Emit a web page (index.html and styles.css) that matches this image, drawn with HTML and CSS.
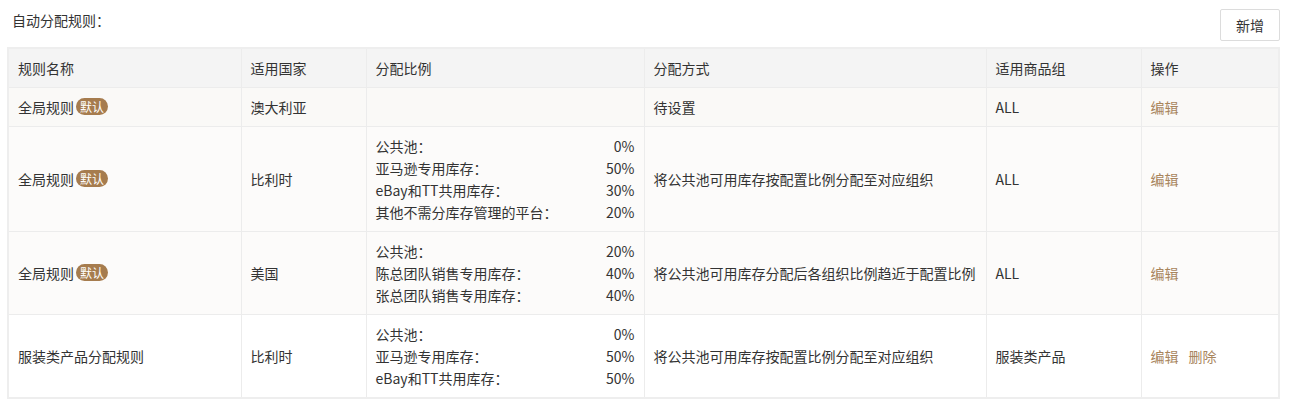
FILE: index.html
```html
<!DOCTYPE html>
<html lang="zh">
<head>
<meta charset="utf-8">
<title>自动分配规则</title>
<link rel="stylesheet" href="styles.css">
</head>
<body>
<div class="bar">
  <div class="title">自动分配规则：</div>
  <button class="btn">新增</button>
</div>
<table class="rules">
  <colgroup>
    <col class="c1"><col class="c2"><col class="c3"><col class="c4"><col class="c5"><col class="c6">
  </colgroup>
  <thead>
    <tr><th>规则名称</th><th>适用国家</th><th>分配比例</th><th>分配方式</th><th>适用商品组</th><th>操作</th></tr>
  </thead>
  <tbody>
    <tr class="r1">
      <td>全局规则<span class="badge">默认</span></td>
      <td>澳大利亚</td>
      <td></td>
      <td>待设置</td>
      <td>ALL</td>
      <td><a class="op">编辑</a></td>
    </tr>
    <tr class="r2">
      <td>全局规则<span class="badge">默认</span></td>
      <td>比利时</td>
      <td>
        <div class="ratio"><span>公共池：</span><span>0%</span></div>
        <div class="ratio"><span>亚马逊专用库存：</span><span>50%</span></div>
        <div class="ratio"><span>eBay和TT共用库存：</span><span>30%</span></div>
        <div class="ratio"><span>其他不需分库存管理的平台：</span><span>20%</span></div>
      </td>
      <td>将公共池可用库存按配置比例分配至对应组织</td>
      <td>ALL</td>
      <td><a class="op">编辑</a></td>
    </tr>
    <tr class="r2">
      <td>全局规则<span class="badge">默认</span></td>
      <td>美国</td>
      <td>
        <div class="ratio"><span>公共池：</span><span>20%</span></div>
        <div class="ratio"><span>陈总团队销售专用库存：</span><span>40%</span></div>
        <div class="ratio"><span>张总团队销售专用库存：</span><span>40%</span></div>
      </td>
      <td>将公共池可用库存分配后各组织比例趋近于配置比例</td>
      <td>ALL</td>
      <td><a class="op">编辑</a></td>
    </tr>
    <tr class="r4">
      <td>服装类产品分配规则</td>
      <td>比利时</td>
      <td>
        <div class="ratio"><span>公共池：</span><span>0%</span></div>
        <div class="ratio"><span>亚马逊专用库存：</span><span>50%</span></div>
        <div class="ratio"><span>eBay和TT共用库存：</span><span>50%</span></div>
      </td>
      <td>将公共池可用库存按配置比例分配至对应组织</td>
      <td>服装类产品</td>
      <td><a class="op">编辑</a><a class="op">删除</a></td>
    </tr>
  </tbody>
</table>
</body>
</html>
```
FILE: styles.css
```css
html, body {
  margin: 0;
  background: #fff;
}
body {
  padding: 9px 17px 0 7px;
  font-family: "Noto Sans CJK SC", "Noto Sans", "Liberation Sans", sans-serif;
  font-size: 14px;
  color: #333;
}
.bar {
  display: flex;
  justify-content: space-between;
  align-items: flex-start;
  margin-bottom: 6px;
}
.title {
  padding-left: 5px;
  line-height: 22px;
  font-size: 14px;
}
.btn {
  width: 60px;
  height: 32px;
  border: 1px solid #dcdcdc;
  border-radius: 2px;
  background: #fff;
  font-family: inherit;
  font-size: 14px;
  color: #333;
  padding: 0;
}
.rules {
  width: 1273px;
  border-collapse: collapse;
  table-layout: fixed;
  border: 2px solid #eeeeee;
}
.c1 { width: 233px; }
.c2 { width: 125px; }
.c3 { width: 278px; }
.c4 { width: 342px; }
.c5 { width: 155px; }
.c6 { width: auto; }
.rules th, .rules td {
  border: 1px solid #ececec;
  padding: 8px 9px;
  line-height: 22px;
  text-align: left;
  font-weight: normal;
  font-size: 14px;
  vertical-align: middle;
}
.rules th {
  background: #f4f4f4;
  padding-top: 8px;
  padding-bottom: 8px;
}
.r1 td { background: #faf9f7; }
.r2 td { background: #fcfbfa; }
.r4 td { background: #fff; }
.badge {
  display: inline-block;
  margin-left: 2px;
  padding: 0 4px;
  height: 17px;
  line-height: 17px;
  border-radius: 9px;
  background: #a67c4e;
  color: #fff;
  font-size: 12px;
  vertical-align: 1px;
}
.ratio {
  display: flex;
  justify-content: space-between;
}
.op {
  color: #a8855d;
  margin-right: 10px;
  cursor: pointer;
}
```
